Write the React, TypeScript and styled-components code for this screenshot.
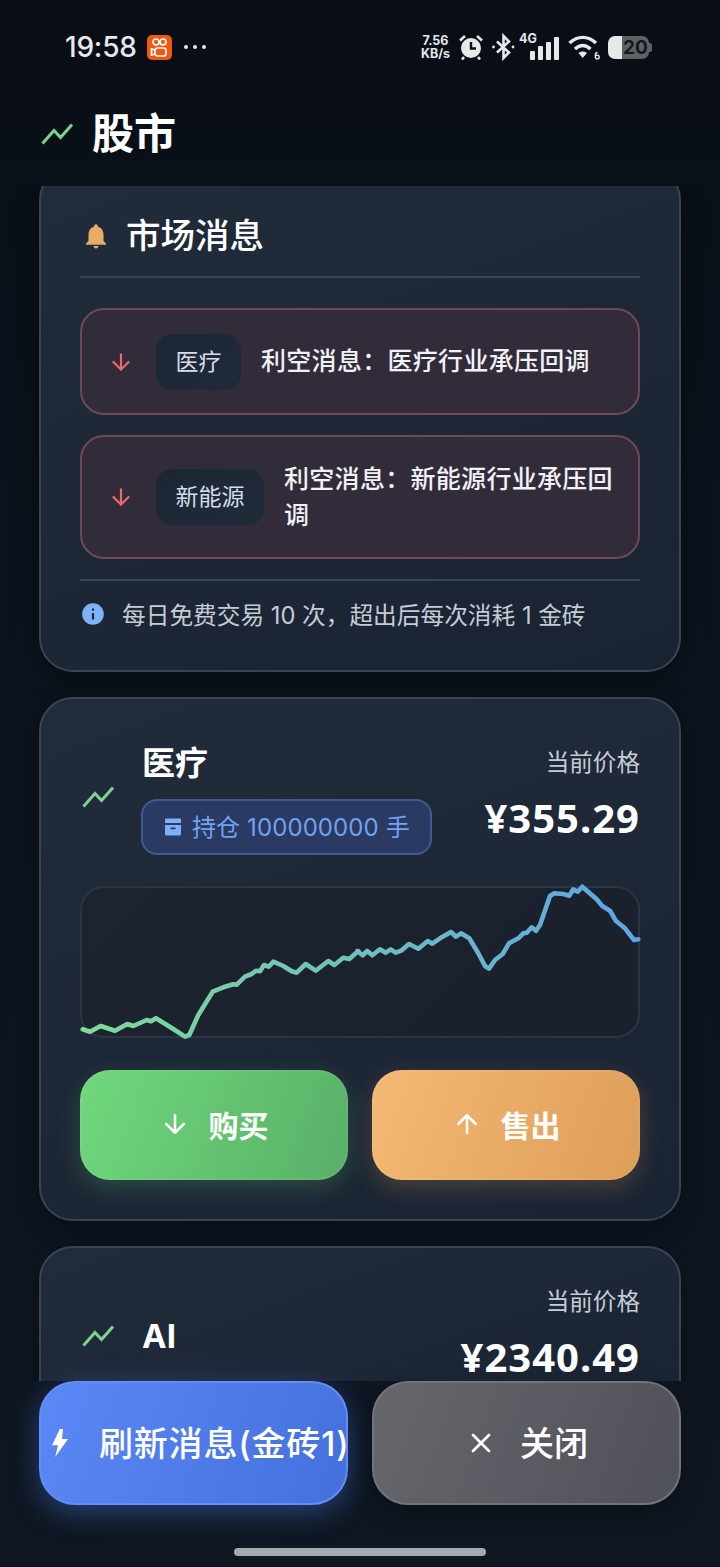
import React from "react";
import styled, { createGlobalStyle } from "styled-components";
import { ArrowDown, ArrowUp, X } from "lucide-react";

const Global = createGlobalStyle`
  html, body { margin: 0; padding: 0; background: #0b111b; }
  body { font-family: "Inter", "Noto Sans CJK SC", "Noto Sans", sans-serif; }
  * { box-sizing: border-box; }
`;

const Page = styled.div`
  width: 720px;
  height: 1567px;
  display: flex;
  flex-direction: column;
  overflow: hidden;
  color: #fff;
  background: linear-gradient(180deg, #090e16 0%, #0c131d 45%, #0f1722 100%);
`;

const StatusBar = styled.div`
  height: 90px;
  padding: 4px 68px 0 65px;
  display: flex;
  align-items: center;
  justify-content: space-between;
  flex: none;
`;
const StatusLeft = styled.div`
  display: flex;
  align-items: center;
`;
const Clock = styled.span`
  font-size: 28px;
  font-weight: 500;
  color: #e6e8ea;
  width: 82px;
  letter-spacing: -0.2px;
`;
const AppBadge = styled.span`
  width: 25px;
  height: 25px;
  border-radius: 5px;
  background: #f2570f;
  display: flex;
  align-items: center;
  justify-content: center;
`;
const MoreDots = styled.span`
  margin-left: 12px;
  display: flex;
  gap: 5px;
`;
const Dot = styled.i`
  width: 4px;
  height: 4px;
  border-radius: 50%;
  background: #e6e8ea;
`;
const StatusRight = styled.div`
  display: flex;
  align-items: center;
  gap: 8px;
`;
const Speed = styled.span`
  width: 31px;
  font-size: 12.5px;
  font-weight: 700;
  line-height: 13px;
  color: #e6e8ea;
  text-align: center;
  white-space: nowrap;
`;
const SignalWrap = styled.span`
  position: relative;
  width: 41px;
  height: 28px;
  margin-left: -5px;
  display: block;
`;
const FourG = styled.span`
  position: absolute;
  left: 0;
  top: -2px;
  font-size: 12.5px;
  font-weight: 700;
  color: #e6e8ea;
`;
const BarsSlot = styled.span`
  position: absolute;
  right: 0;
  bottom: 0;
  display: flex;
`;
const Battery = styled.span`
  width: 44px;
  height: 24px;
  display: flex;
  align-items: center;
`;
const BatteryFill = styled.span`
  width: 14px;
  height: 23px;
  background: #e6e8ea;
  border-radius: 7px 0 0 7px;
`;
const BatteryRest = styled.span`
  width: 27px;
  height: 23px;
  background: #5f6265;
  border-radius: 0 7px 7px 0;
  color: #14181d;
  font-size: 19px;
  font-weight: 700;
  line-height: 23px;
  text-align: center;
`;
const BatteryNub = styled.span`
  width: 3px;
  height: 9px;
  background: #5f6265;
  border-radius: 0 2px 2px 0;
`;

const Header = styled.div`
  height: 96px;
  flex: none;
  padding: 0 0 8px 41px;
  display: flex;
  align-items: center;
  gap: 19px;
`;
const PageTitle = styled.h1`
  margin: 0;
  font-size: 42px;
  font-weight: 700;
  color: #fff;
  line-height: 56px;
`;

const Scroller = styled.div`
  height: 1195px;
  flex: none;
  overflow: hidden;
  padding: 0 39px;
`;
const ScrollContent = styled.div`
  margin-top: -20px;
  display: flex;
  flex-direction: column;
  gap: 25px;
`;
const Card = styled.section`
  border: 2px solid #3a4454;
  border-radius: 34px;
  padding: 40px 39px 39px;
  background: linear-gradient(160deg, #212c3b 0%, #1a2332 100%);
  box-shadow: 0 8px 24px rgba(0, 0, 0, 0.35);
`;
const NoticeCard = styled(Card)`
  padding-bottom: 38px;
`;
const NoticeHead = styled.div`
  height: 56px;
  display: flex;
  align-items: center;
  gap: 15px;
  padding-left: 1px;
`;
const NoticeTitle = styled.h2`
  margin: 0;
  font-size: 34.5px;
  font-weight: 500;
  line-height: 56px;
  color: #fff;
`;
const Rule = styled.div`
  height: 2px;
  background: #3a4454;
`;
const TopRule = styled(Rule)`
  margin-top: 12px;
`;
const NewsList = styled.div`
  margin: 30px 0 20px;
  display: flex;
  flex-direction: column;
  gap: 20px;
`;
const NewsItem = styled.div`
  border: 2px solid #6f4a55;
  border-radius: 24px;
  background: #322c3a;
  padding: 23.5px 22px 23.5px 26px;
  display: flex;
  align-items: center;
  color: #f0f2f5;
`;
const NewsArrow = styled.span`
  width: 26px;
  flex: none;
  display: flex;
  justify-content: center;
  color: #ea6b6b;
  margin-right: 22px;
`;
const SectorTag = styled.span`
  height: 56px;
  flex: none;
  padding: 0 19.5px;
  border-radius: 16px;
  background: linear-gradient(135deg, #1c2735 0%, #1f2b39 100%);
  color: #d6dde6;
  font-size: 23px;
  line-height: 56px;
  margin-right: 20px;
`;
const NewsText = styled.span`
  font-size: 25px;
  font-weight: 500;
  line-height: 36.5px;
  letter-spacing: 0.3px;
`;
const InfoRow = styled.div`
  margin-top: 15px;
  height: 36px;
  display: flex;
  align-items: center;
  gap: 16px;
  color: #c5ccd6;
  font-size: 23.7px;
`;

const StockHead = styled.div`
  display: flex;
  align-items: center;
  justify-content: space-between;
`;
const StockLeft = styled.div`
  display: flex;
  align-items: center;
  gap: 25px;
`;
const TrendBox = styled.span`
  width: 36px;
  display: flex;
  justify-content: center;
  flex: none;
`;
const StockName = styled.div`
  font-size: 33px;
  font-weight: 700;
  line-height: 48px;
  padding-left: 1px;
  color: #fff;
`;
const Holding = styled.div`
  margin-top: 12px;
  height: 56px;
  padding: 0 20px;
  display: flex;
  align-items: center;
  gap: 9px;
  border-radius: 16px;
  border: 2px solid #3f5a95;
  background: #2a3a62;
  color: #6fa4f0;
  font-size: 24px;
  letter-spacing: 0.1px;
  white-space: nowrap;
`;
const HoldingText = styled.span`
  padding-bottom: 4px;
`;
const PriceBox = styled.div`
  height: 96px;
  text-align: right;
  flex: none;
`;
const PriceLabel = styled.div`
  font-size: 23.6px;
  line-height: 28px;
  color: #c5ccd6;
`;
const PriceValue = styled.div`
  margin-top: 19px;
  font-family: "Noto Sans", sans-serif;
  font-size: 40px;
  font-weight: 700;
  letter-spacing: 1px;
  line-height: 44px;
  color: #fff;
`;
const ChartBox = styled.div`
  margin-top: 31px;
  height: 152px;
  border-radius: 24px;
  border: 2px solid #2c3543;
  background: linear-gradient(135deg, #1c2430 0%, #1a202c 100%);
`;
const ChartSvg = styled.svg`
  display: block;
  margin: -2px;
  overflow: visible;
`;
const ActionRow = styled.div`
  margin-top: 32px;
  display: grid;
  grid-template-columns: 1fr 1fr;
  gap: 24px;
`;
const TradeButton = styled.button<{ $kind: "buy" | "sell" }>`
  height: 110px;
  border: 2px solid rgba(255, 255, 255, 0.05);
  background-origin: border-box;
  border-radius: 30px;
  background-image: ${(p) =>
    p.$kind === "buy"
      ? "linear-gradient(110deg, #70d87c 0%, #58b068 100%)"
      : "linear-gradient(110deg, #f4b974 0%, #dd9e58 100%)"};
  box-shadow: 0 8px 24px
    ${(p) => (p.$kind === "buy" ? "rgba(104, 211, 125, 0.22)" : "rgba(240, 175, 100, 0.22)")};
  color: #fff;
  font: inherit;
  font-size: 30px;
  font-weight: 700;
  display: flex;
  align-items: center;
  justify-content: center;
  gap: 19px;
  padding: 0 0 2px;
`;

const Footer = styled.div`
  flex: none;
  height: 186px;
  padding: 0 39px;
`;
const FooterRow = styled.div`
  display: grid;
  grid-template-columns: 309px 309px;
  gap: 24px;
`;
const FooterButton = styled.button<{ $kind: "refresh" | "close" }>`
  height: 124px;
  border: 2px solid ${(p) => (p.$kind === "refresh" ? "#648ef5" : "#727479")};
  border-radius: 36px;
  background: ${(p) =>
    p.$kind === "refresh"
      ? "linear-gradient(110deg, #5b88f6 0%, #4470dc 100%)"
      : "linear-gradient(110deg, #66676d 0%, #4f5158 100%)"};
  box-shadow: ${(p) =>
    p.$kind === "refresh" ? "0 8px 28px rgba(80, 130, 245, 0.38)" : "0 8px 24px rgba(0,0,0,.3)"};
  color: #fff;
  font: inherit;
  font-size: 34px;
  font-weight: 500;
  letter-spacing: ${(p) => (p.$kind === "refresh" ? "0.8px" : "0")};
  white-space: nowrap;
  display: flex;
  align-items: center;
  justify-content: ${(p) => (p.$kind === "refresh" ? "flex-start" : "center")};
  gap: 23px;
  padding: 0 0 0 ${(p) => (p.$kind === "refresh" ? "3px" : "0")};
  svg {
    flex: none;
  }
`;
const FooterLabel = styled.span`
  flex: none;
  padding-bottom: 4px;
`;
const HomeIndicator = styled.div`
  width: 252px;
  height: 8px;
  margin: 43px auto 0;
  border-radius: 4px;
  background: #a6aaaf;
`;

const raw1 = [[38,448],[60,455],[92,438],[135,452],[172,432],[190,438],[230,420],[243,424],[258,415],[310,447],[345,470],[358,465],[385,405],[428,335],[460,322],[490,313],[500,314],[525,290],[545,282],[558,272],[570,274],[582,255],[596,260],[610,245],[640,258],[665,274],[680,278],[707,252],[737,272],[775,243],[793,255],[820,233],[838,237],[865,213]];
const raw2 = [[22,213],[38,226],[52,213],[67,226],[90,208],[107,218],[122,208],[137,218],[155,211],[177,192],[205,206],[233,183],[247,191],[270,175],[303,156],[318,170],[333,160],[358,175],[385,220],[405,258],[417,266],[435,240],[458,222],[477,190],[505,175],[520,160],[530,158],[545,142],[558,152],[570,135],[600,48],[612,40],[640,42],[658,47],[670,28],[683,35],[697,20],[740,58],[757,78],[780,92],[797,122],[825,145],[852,180],[865,178]];
const chartPoints = [
  ...raw1.map(([x, y]) => [70 + x / 3 - 80, 880 + y / 3 - 886]),
  ...raw2.map(([x, y]) => [350 + x / 3 - 80, 880 + y / 3 - 886]),
]
  .map(([x, y]) => `${x.toFixed(1)},${y.toFixed(1)}`)
  .join(" ");

const Trend = () => (
  <svg width="32" height="22" viewBox="0 0 32 22" fill="none" stroke="#7ad48d" strokeWidth="3" strokeLinejoin="miter">
    <polyline points="1.5,20.5 13,7.5 19.5,14.5 31,1.5" />
  </svg>
);
const Bell = () => (
  <svg width="30" height="30" viewBox="0 0 24 24" fill="#e9ab66">
    <path d="M12 22c1.1 0 2-.9 2-2h-4c0 1.1.89 2 2 2zm6-6v-5c0-3.07-1.64-5.64-4.5-6.32V4c0-.83-.67-1.5-1.500-1.500s-1.500.67-1.500 1.500v.68C7.63 5.36 6 7.92 6 11v5l-2 2v1h16v-1l-2-2z" />
  </svg>
);
const Info = () => (
  <svg width="26" height="26" viewBox="0 0 24 24" fill="#7fb3f7">
    <path d="M12 2C6.48 2 2 6.48 2 12s4.48 10 10 10 10-4.48 10-10S17.52 2 12 2zm1 15h-2v-6h2v6zm0-8h-2V7h2v2z" />
  </svg>
);
const Archive = () => (
  <svg width="20" height="20" viewBox="0 0 20 20" fill="#7eb0f5">
    <path d="M2 2.500a1 1 0 0 1 1-1h14a1 1 0 0 1 1 1V6H2z" />
    <path fillRule="evenodd" d="M2 8h16v9a1.500 1.500 0 0 1-1.500 1.500h-13A1.500 1.500 0 0 1 2 17zm5.500 2.500v1.800h5v-1.800z" />
  </svg>
);
const Bolt = () => (
  <svg width="32" height="28" viewBox="-8 0 32 28" fill="#fff">
    <path d="M7.800 0 0 16.300h6L3.200 28 16 10h-6L11 0z" />
  </svg>
);
const KwaiLogo = () => (
  <svg width="19" height="21" viewBox="0 0 19 21" fill="none" stroke="#fff" strokeWidth="1.7">
    <circle cx="6" cy="5" r="3" />
    <circle cx="13" cy="5" r="3" />
    <rect x="5" y="11" width="11" height="8" rx="2.500" />
    <path d="M5 13 1.500 12v6L5 17" />
  </svg>
);
const Alarm = () => (
  <svg width="24" height="26" viewBox="0 0 24 26" fill="none">
    <circle cx="12" cy="14" r="10" fill="#e6e8ea" />
    <path d="M12 8v6.500h5" stroke="#0b111b" strokeWidth="2.400" />
    <path d="M1 6.500 6 2M23 6.500 18 2M5 23l-2 2.500M19 23l2 2.500" stroke="#e6e8ea" strokeWidth="2.600" />
  </svg>
);
const Bluetooth = () => (
  <svg width="25" height="28" viewBox="0 0 25 28" fill="none" stroke="#e6e8ea" strokeWidth="2.600">
    <path d="M6 8.500 18 19.500 12.500 25V3L18 8.500 6 19.500" />
    <circle cx="2.500" cy="14" r="1.400" fill="#e6e8ea" stroke="none" />
    <circle cx="22" cy="14" r="1.400" fill="#e6e8ea" stroke="none" />
  </svg>
);
const Bars = () => (
  <svg width="30" height="24" viewBox="0 0 30 24" fill="#e6e8ea">
    <rect x="0" y="14" width="5" height="9" rx="1" />
    <rect x="8" y="9" width="5" height="14" rx="1" />
    <rect x="16" y="5" width="5" height="18" rx="1" />
    <rect x="24" y="0" width="5" height="23" rx="1" />
  </svg>
);
const Wifi = () => (
  <svg width="32" height="26" viewBox="0 0 32 26" fill="none" stroke="#e6e8ea" strokeWidth="3.400">
    <path d="M1.500 9C9.500 1.500 20 1.500 28 9" />
    <path d="M7 15c5-4.500 10.500-4.500 15.500 0" />
    <path d="M10.500 19 14.700 24 19 19c-2.500-2-6-2-8.500 0z" fill="#e6e8ea" stroke="none" />
    <path d="M29.500 18.500c-1.500 0-2.200 1.400-2.200 3.400s.7 3 2 3 1.900-1 1.900-2-.7-1.800-1.800-1.800-1.800.6-2 1.200" strokeWidth="1.400" />
  </svg>
);

function StockCard({ name, price, holding, children }: { name: string; price: string; holding?: string; children?: React.ReactNode }) {
  return (
    <Card>
      <StockHead>
        <StockLeft>
          <TrendBox><Trend /></TrendBox>
          <div>
            <StockName>{name}</StockName>
            {holding && (
              <Holding>
                <Archive />
                <HoldingText>{holding}</HoldingText>
              </Holding>
            )}
          </div>
        </StockLeft>
        <PriceBox>
          <PriceLabel>当前价格</PriceLabel>
          <PriceValue>{price}</PriceValue>
        </PriceBox>
      </StockHead>
      {children}
    </Card>
  );
}

export default function App() {
  return (
    <Page>
      <Global />
      <StatusBar>
        <StatusLeft>
          <Clock>19:58</Clock>
          <AppBadge><KwaiLogo /></AppBadge>
          <MoreDots><Dot /><Dot /><Dot /></MoreDots>
        </StatusLeft>
        <StatusRight>
          <Speed>7.56<br />KB/s</Speed>
          <Alarm />
          <Bluetooth />
          <SignalWrap>
            <FourG>4G</FourG>
            <BarsSlot><Bars /></BarsSlot>
          </SignalWrap>
          <Wifi />
          <Battery>
            <BatteryFill />
            <BatteryRest>20</BatteryRest>
            <BatteryNub />
          </Battery>
        </StatusRight>
      </StatusBar>

      <Header>
        <Trend />
        <PageTitle>股市</PageTitle>
      </Header>

      <Scroller>
        <ScrollContent>
          <NoticeCard>
            <NoticeHead>
              <Bell />
              <NoticeTitle>市场消息</NoticeTitle>
            </NoticeHead>
            <TopRule />
            <NewsList>
              <NewsItem>
                <NewsArrow><ArrowDown size={26} strokeWidth={2} /></NewsArrow>
                <SectorTag>医疗</SectorTag>
                <NewsText>利空消息：医疗行业承压回调</NewsText>
              </NewsItem>
              <NewsItem>
                <NewsArrow><ArrowDown size={26} strokeWidth={2} /></NewsArrow>
                <SectorTag>新能源</SectorTag>
                <NewsText>利空消息：新能源行业承压回调</NewsText>
              </NewsItem>
            </NewsList>
            <Rule />
            <InfoRow>
              <Info />
              每日免费交易 10 次，超出后每次消耗 1 金砖
            </InfoRow>
          </NoticeCard>

          <StockCard name="医疗" price="¥355.29" holding="持仓 100000000 手">
            <ChartBox>
              <ChartSvg width="560" height="152" viewBox="0 0 560 152" fill="none">
                <defs>
                  <linearGradient id="line" x1="0" x2="1" y1="0" y2="0">
                    <stop offset="0" stopColor="#7fdb97" />
                    <stop offset="1" stopColor="#5ea4e4" />
                  </linearGradient>
                </defs>
                <polyline points={chartPoints} stroke="url(#line)" strokeWidth="4.600" strokeLinejoin="round" strokeLinecap="round" />
              </ChartSvg>
            </ChartBox>
            <ActionRow>
              <TradeButton $kind="buy"><ArrowDown size={30} strokeWidth={2} />购买</TradeButton>
              <TradeButton $kind="sell"><ArrowUp size={30} strokeWidth={2} />售出</TradeButton>
            </ActionRow>
          </StockCard>

          <StockCard name="AI" price="¥2340.49" />
        </ScrollContent>
      </Scroller>

      <Footer>
        <FooterRow>
          <FooterButton $kind="refresh"><Bolt /><FooterLabel>刷新消息(金砖1)</FooterLabel></FooterButton>
          <FooterButton $kind="close"><X size={32} strokeWidth={2} /><FooterLabel>关闭</FooterLabel></FooterButton>
        </FooterRow>
        <HomeIndicator />
      </Footer>
    </Page>
  );
}
